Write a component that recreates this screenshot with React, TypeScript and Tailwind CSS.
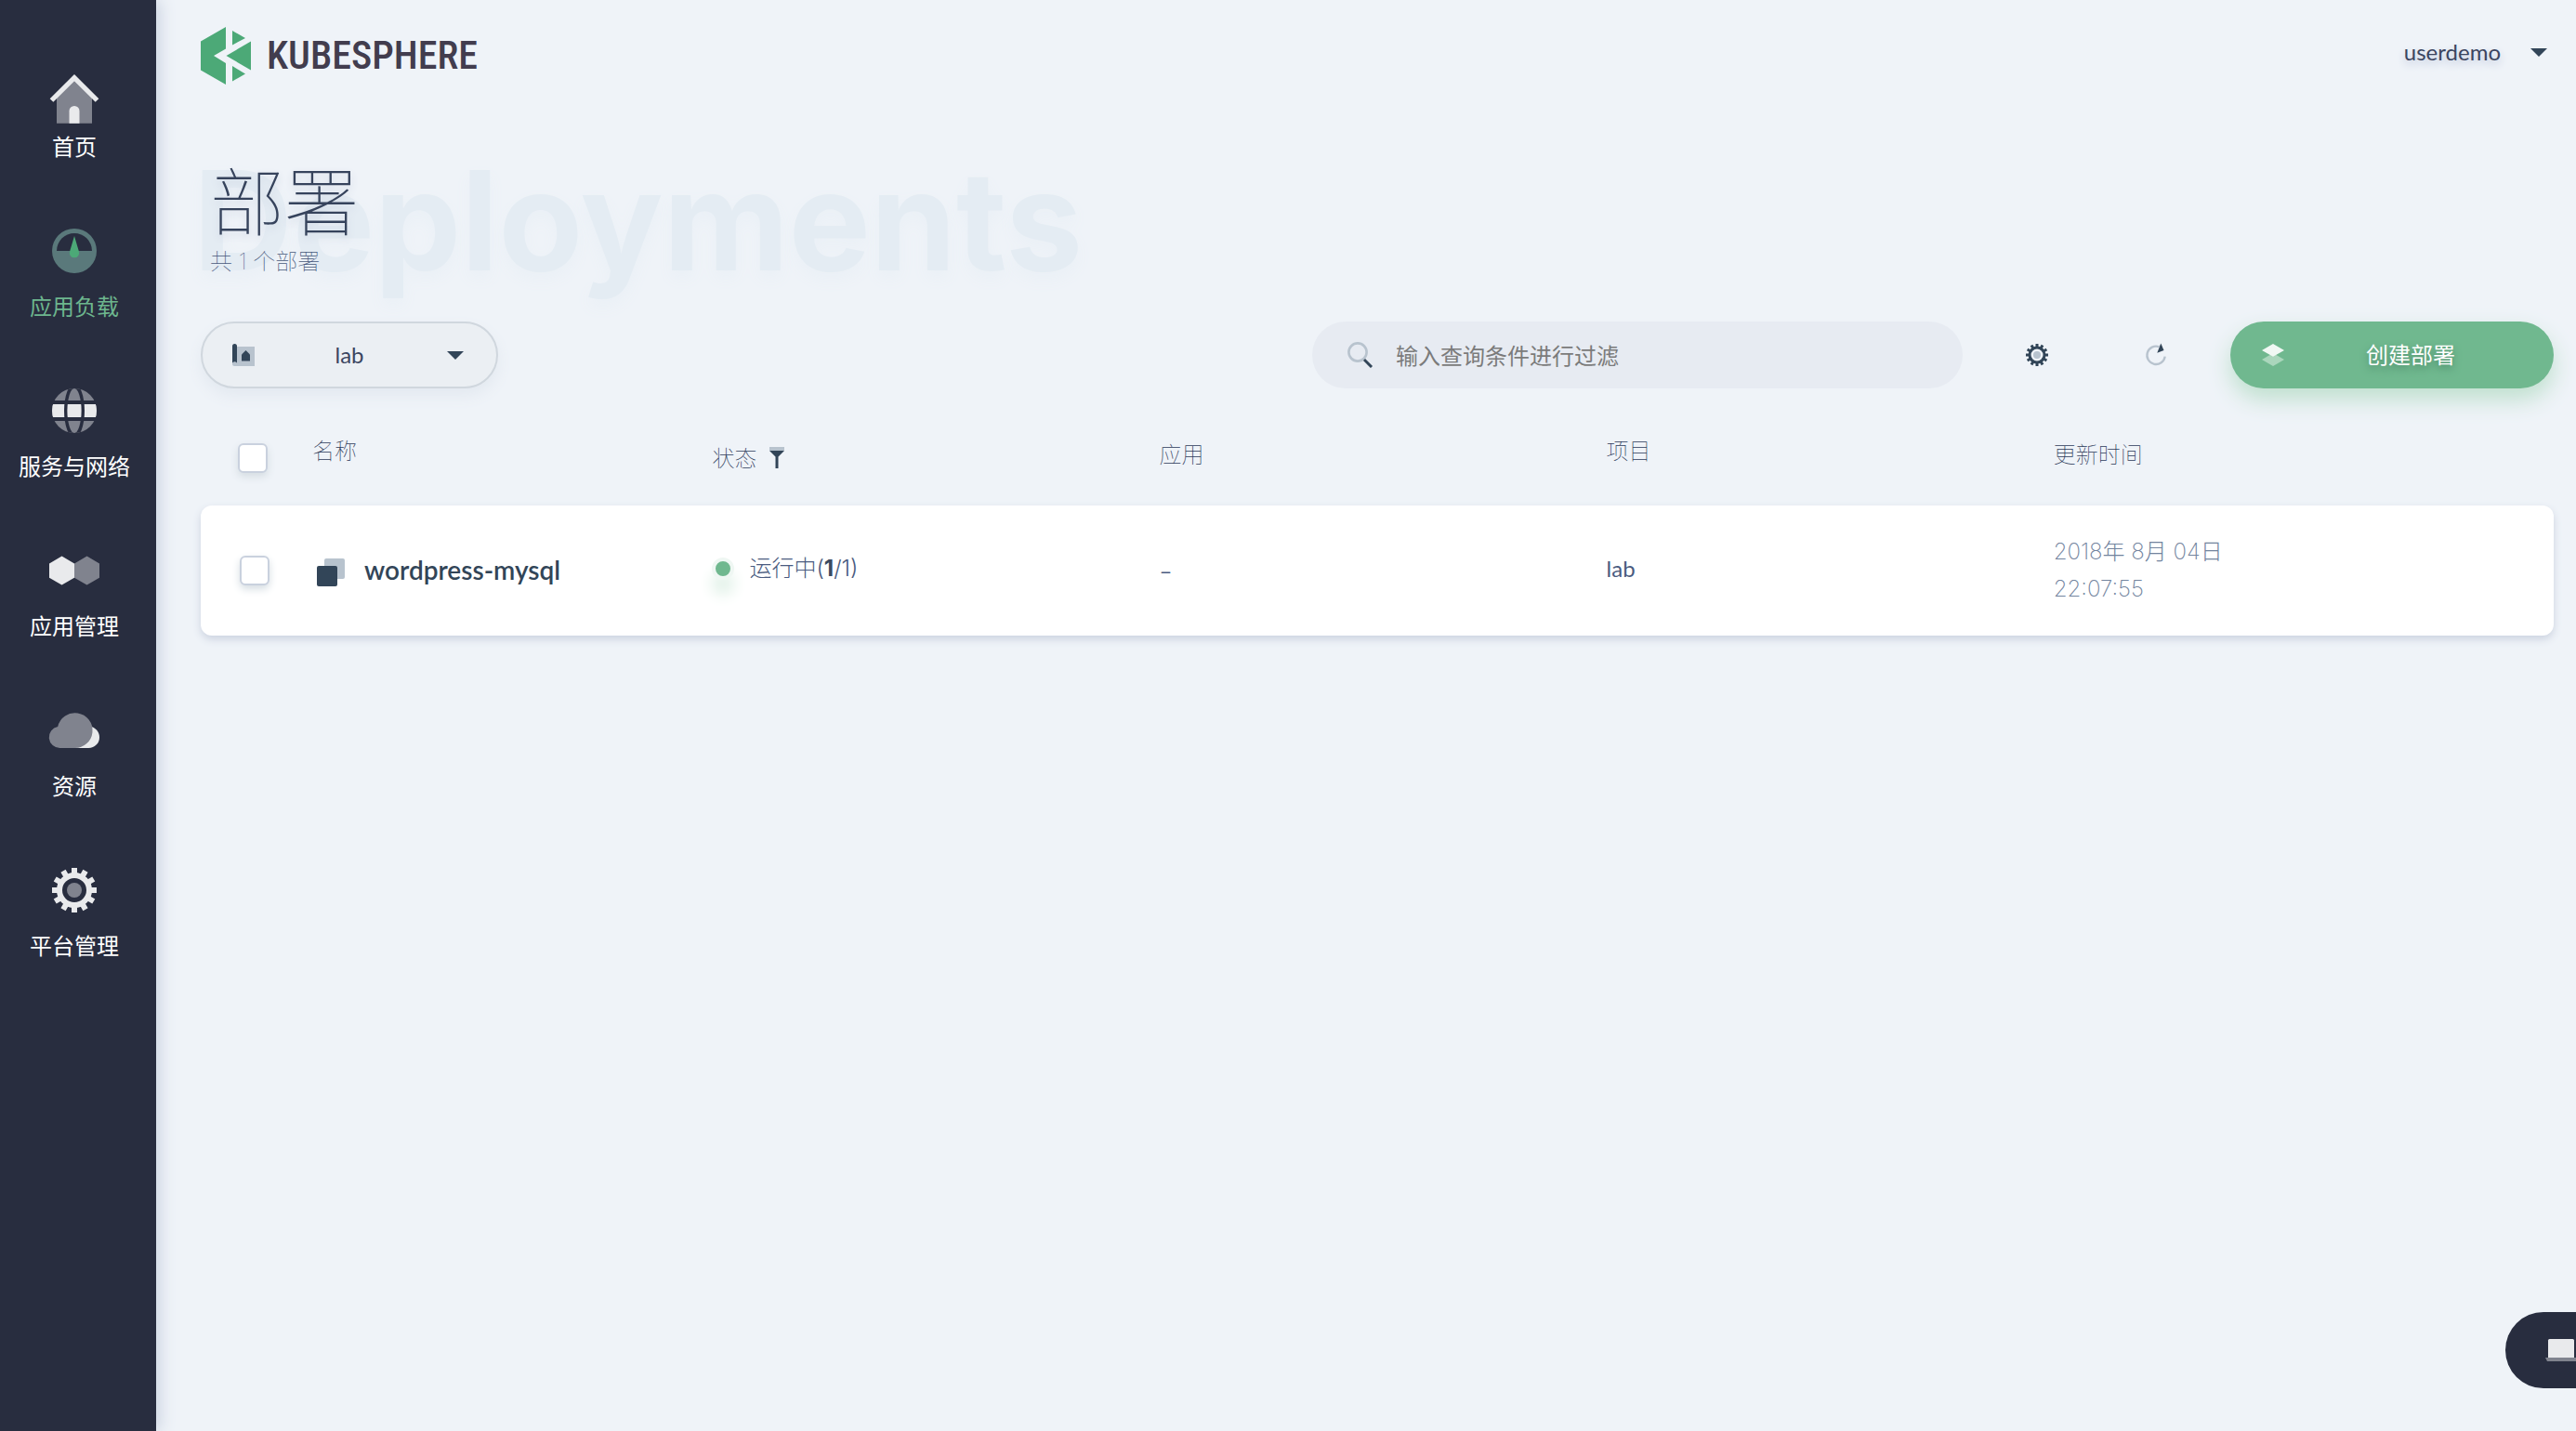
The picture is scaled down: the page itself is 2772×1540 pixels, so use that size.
import type { ReactNode } from "react";

function HomeIcon() {
  return (
    <svg viewBox="0 0 64 64" className="size-16 overflow-visible" aria-hidden="true">
      <path d="M13 36 32 17 51 36V64.7H13Z" fill="#80838e" />
      <path d="M26.5 64.7V51.5a5.5 5.5 0 0 1 11 0V64.7Z" fill="#e9eaec" />
      <path d="M7.5 40 32 15.6 56.5 40" fill="none" stroke="#e9eaec" strokeWidth="5.2" />
    </svg>
  );
}

function GaugeIcon() {
  return (
    <svg viewBox="0 0 64 64" className="size-16" aria-hidden="true">
      <circle cx="32" cy="30" r="24" fill="#5a797b" />
      <path d="M13 30a19 19 0 0 1 38 0Z" fill="#282d3f" />
      <path d="M32 14 36.9 30.4a5.2 5.2 0 1 1-9.8 0Z" fill="#4ca977" />
    </svg>
  );
}

function GlobeIcon() {
  return (
    <svg viewBox="0 0 64 64" className="size-16" aria-hidden="true">
      <defs>
        <clipPath id="globe-disc">
          <circle cx="32" cy="30" r="24" />
        </clipPath>
        <clipPath id="globe-petal">
          <ellipse cx="32" cy="30" rx="7.5" ry="24" />
        </clipPath>
      </defs>
      <g clipPath="url(#globe-disc)">
        <rect x="8" y="6" width="48" height="48" fill="#80838e" />
        <rect x="8" y="21" width="48" height="18" fill="#e9eaec" />
        <ellipse cx="32" cy="30" rx="11" ry="29" fill="#282d3f" />
      </g>
      <g clipPath="url(#globe-petal)">
        <rect x="20" y="6" width="24" height="48" fill="#80838e" />
        <rect x="20" y="21" width="24" height="18" fill="#e9eaec" />
      </g>
      <rect x="6" y="19" width="52" height="4" fill="#282d3f" />
      <rect x="6" y="37" width="52" height="4" fill="#282d3f" />
    </svg>
  );
}

function HexIcon() {
  return (
    <svg viewBox="0 0 64 64" className="size-16" aria-hidden="true">
      <path d="M18.5 14.6 32 22.4V37.8L18.5 45.6 5 37.8V22.4Z" fill="#e9eaec" />
      <path d="M45.5 14.6 59 22.4V37.8L45.5 45.6 32 37.8V22.4Z" fill="#80838e" />
    </svg>
  );
}

function CloudIcon() {
  return (
    <svg viewBox="0 0 64 64" className="size-16" aria-hidden="true">
      <path d="M32 25.8H47.4a11.6 11.6 0 0 1 0 23.2H32Z" fill="#e9eaec" />
      <path
        d="M16.6 49a11.6 11.6 0 0 1-2.4-23A18.9 18.9 0 1 1 32 49Z"
        fill="#80838e"
      />
    </svg>
  );
}

function Gear({ className, ring, hub }: { className: string; ring: string; hub: string }) {
  return (
    <svg viewBox="0 0 48 48" className={className} aria-hidden="true">
      <g fill={ring}>
        {[0, 30, 60, 90, 120, 150].map((a) => (
          <path key={a} d="M21 0h6v8h-6ZM21 40h6v8h-6Z" transform={`rotate(${a} 24 24)`} />
        ))}
      </g>
      <circle cx="24" cy="24" r="16" fill="none" stroke={ring} strokeWidth="6" />
      <circle cx="24" cy="24" r="8" fill={hub} />
    </svg>
  );
}

function PlatformIcon() {
  return (
    <span className="flex h-16 items-start justify-center pt-1.5">
      <Gear className="size-12" ring="#e9eaec" hub="#80838e" />
    </span>
  );
}

function Caret() {
  return (
    <svg viewBox="0 0 18 9" className="h-[9px] w-[18px]" aria-hidden="true">
      <path d="M0 0h18L9 9Z" fill="#324558" />
    </svg>
  );
}

const NAV: { label: string; icon: ReactNode; active?: boolean }[] = [
  { label: "首页", icon: <HomeIcon /> },
  { label: "应用负载", icon: <GaugeIcon />, active: true },
  { label: "服务与网络", icon: <GlobeIcon /> },
  { label: "应用管理", icon: <HexIcon /> },
  { label: "资源", icon: <CloudIcon /> },
  { label: "平台管理", icon: <PlatformIcon /> },
];

function Sidebar() {
  return (
    <nav className="w-[168px] shrink-0 bg-[#282d3f] pt-[68px] shadow-[4px_0_16px_#cbd3e1]">
      <ul className="flex flex-col gap-16 pr-2">
        {NAV.map((item) => (
          <li key={item.label}>
            <a
              href="#"
              className={
                item.active
                  ? "flex flex-col items-center gap-2 text-[#6db68e]"
                  : "flex flex-col items-center gap-2 text-white"
              }
            >
              {item.icon}
              <span className="text-2xl leading-9">{item.label}</span>
            </a>
          </li>
        ))}
      </ul>
    </nav>
  );
}

function Header() {
  return (
    <header className="flex h-[168px] items-start justify-between pt-7">
      <a href="#" className="flex h-16 items-center gap-[17px]">
        <svg viewBox="0 0 54 62" className="h-[62px] w-[54px]" fill="#4ca977" aria-hidden="true">
          <path d="M27 0V23.5L14 31 27 39V62L0 46.5V15.5Z" />
          <path d="M54 15.5V46.5L27.5 31Z" />
          <path d="M34 4 48 12 34 19.5Z" />
          <path d="M34 42 48 50.5 34 58.5Z" />
        </svg>
        <span className="font-['Roboto_Condensed',sans-serif] text-[42px] leading-none font-medium text-[#423d4e]">
          KUBESPHERE
        </span>
      </a>
      <button
        type="button"
        className="flex h-14 items-center gap-8 pr-[7px] text-2xl text-[#3b4560] [text-shadow:0_4px_8px_#b9c3da]"
      >
        userdemo
        <Caret />
      </button>
    </header>
  );
}

function Title() {
  return (
    <section className="relative isolate pl-2.5">
      <span
        aria-hidden="true"
        className="absolute -top-1 -left-2 -z-10 font-['Inter',sans-serif] text-[148px] leading-none font-bold text-[#e4ecf3] [text-shadow:0_8px_16px_#eaf0f6]"
      >
        Deployments
      </span>
      <h1 className="text-[80px] leading-[96px] font-thin text-[#36435c] [text-shadow:0_4px_8px_#cdd5e3]">
        部署
      </h1>
      <p className="font-['Inter','Noto_Sans_CJK_SC',sans-serif] text-2xl leading-9 font-thin text-[#4a5b80]">
        共 1 个部署
      </p>
    </section>
  );
}

function Toolbar() {
  return (
    <div className="mt-[46px] flex items-center">
      <div className="relative h-[72px] w-80 rounded-full bg-[#ebeff3] shadow-[0_8px_16px_#e3e9f0]">
        <select
          aria-label="项目"
          className="size-full appearance-none rounded-full border-2 border-[#d0d7de] bg-transparent text-center text-2xl text-[#3b4560]"
        >
          <option>lab</option>
        </select>
        <div className="pointer-events-none absolute inset-0 flex items-center justify-between pr-[37px] pl-[34px]">
          <svg viewBox="0 0 24 24" className="size-6" aria-hidden="true">
            <path d="M0 18H5V3H24V24H2.5A2.5 2.5 0 0 1 0 21.500Z" fill="#b8c3ce" />
            <path d="M0 2.500a2.500 2.500 0 0 1 5 0V20.500Q2.500 18 0 20.500Z" fill="#324558" />
            <path d="M14.500 7 19 11.500V18.500H10V11.500Z" fill="#324558" />
          </svg>
          <Caret />
        </div>
      </div>

      <label className="ml-auto flex h-[72px] w-[700px] items-center gap-6 rounded-full bg-[#e7ebf2] pr-8 pl-[38px]">
        <svg viewBox="0 0 28 28" className="size-7 shrink-0" aria-hidden="true">
          <circle cx="11" cy="11" r="9.600" fill="none" stroke="#b8c3ce" strokeWidth="2.600" />
          <path d="M18 19 26 27" stroke="#324558" strokeWidth="3" />
        </svg>
        <input
          type="text"
          aria-label="过滤"
          placeholder="输入查询条件进行过滤"
          className="h-full min-w-0 flex-1 bg-transparent text-2xl text-[#3b4560] outline-none placeholder:font-normal placeholder:text-[#7b7b7b]"
        />
      </label>

      <button type="button" aria-label="设置" className="ml-4 flex h-[72px] w-32 items-center justify-center">
        <Gear className="size-6" ring="#324558" hub="#b8c3ce" />
      </button>
      <button type="button" aria-label="刷新" className="flex h-[72px] w-32 items-center justify-center">
        <svg viewBox="0 0 24 28" className="h-7 w-6" fill="none" aria-hidden="true">
          <path d="M21.700 15.600A9.700 9.700 0 1 1 15.500 5.200" stroke="#b8c3ce" strokeWidth="2.300" />
          <path d="M17.300 1.500 20.500 9 13.300 11.800Z" fill="#324558" />
        </svg>
      </button>

      <button
        type="button"
        className="ml-4 flex h-[72px] w-[348px] items-center rounded-full bg-[#70b88f] pr-[18px] pl-[34px] text-2xl text-white shadow-[0_12px_24px_#bfe0ce]"
      >
        <svg viewBox="0 0 24 24" className="size-6" aria-hidden="true">
          <path d="M0 17 12 10 24 17 12 24Z" fill="#aad6bc" />
          <path d="M0 7 12 0 24 7 12 13.700Z" fill="#f1f8f4" />
        </svg>
        <span className="flex-1 text-center [text-shadow:0_4px_8px_#4a8a68]">创建部署</span>
      </button>
    </div>
  );
}

function Check({ label }: { label: string }) {
  return (
    <input
      type="checkbox"
      aria-label={label}
      className="block size-8 appearance-none rounded-md border-2 border-[#c9d1de] bg-white shadow-[0_4px_8px_#d5dde2] checked:bg-[#70b88f]"
    />
  );
}

function DeploymentsTable() {
  return (
    <table className="mt-6 w-full table-fixed border-separate border-spacing-0 text-left text-2xl">
      <colgroup>
        <col className="w-[120px]" />
        <col className="w-[17%]" />
        <col className="w-[19%]" />
        <col className="w-[19%]" />
        <col className="w-[19%]" />
        <col />
      </colgroup>
      <thead>
        <tr className="h-[102px] text-[#2f3d5c] *:p-0 *:font-thin">
          <th className="pl-10!">
            <Check label="全选" />
          </th>
          <th className="pb-4!">名称</th>
          <th>
            <button type="button" className="flex items-center gap-3.5 font-thin">
              状态
              <svg viewBox="0 0 16 24" className="h-6 w-4" aria-hidden="true">
                <path d="M0 0h16v4H0Z" fill="#b8c3ce" />
                <path d="M0 4h16L9.500 10.500V23H6.500V10.500Z" fill="#324558" />
              </svg>
            </button>
          </th>
          <th className="pb-2!">应用</th>
          <th className="pb-4!">项目</th>
          <th className="pb-2!">更新时间</th>
        </tr>
      </thead>
      <tbody>
        <tr className="h-[140px] rounded-xl bg-white text-[#4a5b80] shadow-[0_4px_8px_#ccd3e0] *:p-0">
          <td className="rounded-l-xl pl-[42px]!">
            <Check label="wordpress-mysql" />
          </td>
          <td>
            <a href="#" className="flex items-center gap-4 text-[28px] font-semibold text-[#324558]">
              <svg viewBox="0 0 40 40" className="size-10" aria-hidden="true">
                <rect x="13" y="7" width="22" height="22" rx="2" fill="#b8c3ce" />
                <rect x="5" y="15" width="22" height="22" rx="2" fill="#324558" />
              </svg>
              wordpress-mysql
            </a>
          </td>
          <td className="pb-1!">
            <span className="flex items-center gap-4">
              <span className="size-6 rounded-full border-4 border-[#eff7f3] bg-[#70b88f] shadow-[0_16px_16px_#e0f1e7]" />
              <span className="font-['Inter','Noto_Sans_CJK_SC',sans-serif] font-light">
                运行中(<b className="font-bold text-[#3c4a60]">1</b>/1)
              </span>
            </span>
          </td>
          <td>–</td>
          <td className="pb-1!">lab</td>
          <td className="rounded-r-xl font-['Inter','Noto_Sans_CJK_SC',sans-serif] leading-10 font-extralight text-[#72849e]">
            2018年 8月 04日
            <br />
            22:07:55
          </td>
        </tr>
      </tbody>
    </table>
  );
}

export default function App() {
  return (
    <div className="flex min-h-screen bg-[#eff3f8] font-['Lato','Noto_Sans_CJK_SC',sans-serif]">
      <Sidebar />
      <main className="min-w-0 flex-1 pr-6 pl-12">
        <Header />
        <Title />
        <Toolbar />
        <DeploymentsTable />
      </main>
      <button
        type="button"
        aria-label="终端"
        className="fixed right-0 bottom-[46px] flex h-[82px] w-[76px] items-center justify-end overflow-hidden rounded-l-full bg-[#282d3f]"
      >
        <svg viewBox="0 0 33 24" className="h-6 w-[33px]" aria-hidden="true">
          <rect x="3" y="0" width="28" height="22" rx="1.500" fill="#e9eaec" />
          <path d="M0 20h33v4H2Z" fill="#80838e" />
        </svg>
      </button>
    </div>
  );
}
